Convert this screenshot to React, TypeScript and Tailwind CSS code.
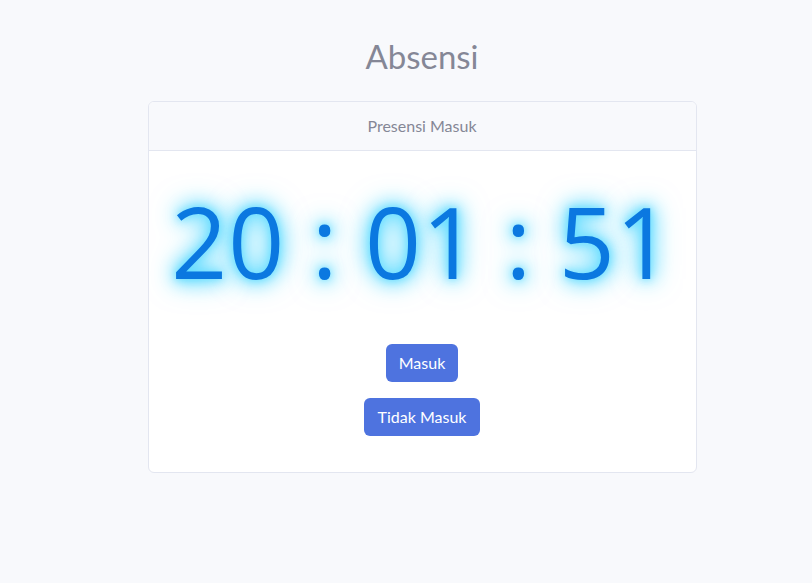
export default function App() {
    const time = { h: "20", m: "01", s: "51" };

    return (
        <div className="min-h-[583px] bg-[#f8f9fc] font-['Lato','Noto_Sans',sans-serif] text-[#858796]">
            <div className="flex flex-col items-center pl-[32px] pt-[34px]">
                {/* Judul */}
                <h1 className="text-[33px] leading-[44px] font-normal text-[#858796]">Absensi</h1>

                {/* Kartu presensi */}
                <div className="mt-[23px] w-[549px] rounded-[6px] border border-[#e3e6f0] bg-white overflow-hidden">
                    <div className="h-[49px] flex items-center justify-center bg-[#f8f9fc] border-b border-[#e3e6f0] text-[16px]">
                        Presensi Masuk
                    </div>

                    <div className="flex flex-col items-center pb-[36px]">
                        <div className="h-[180px] w-full flex items-center justify-center">
                            <div className="font-['Open_Sans',sans-serif] text-[98px] leading-none tracking-[1px] text-[#0b78e0] whitespace-pre [text-shadow:0_0_8px_#5fdcff,0_0_20px_#0ac8ff,0_0_30px_rgba(10,200,255,0.5)]">
                                {time.h} : {time.m} : {time.s}
                            </div>
                        </div>

                        <button className="mt-[13px] rounded-[6px] bg-[#4e73df] px-[13px] h-[38px] text-[16px] text-white">
                            Masuk
                        </button>
                        <button className="mt-[16px] rounded-[6px] bg-[#4e73df] px-[14px] h-[38px] text-[16px] text-white">
                            Tidak Masuk
                        </button>
                    </div>
                </div>
            </div>
        </div>
    );
}
